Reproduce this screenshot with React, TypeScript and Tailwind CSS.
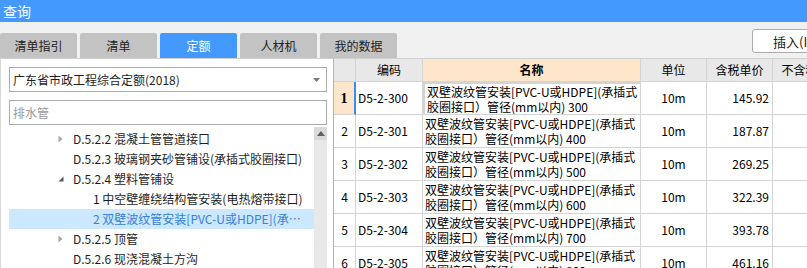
// Query panel: quota library tree on the left, quota item grid on the right

type TreeNode = {
  level: 2 | 3;
  arrow?: 'collapsed' | 'expanded';
  text: string;
  selected?: boolean;
};

const treeNodes: TreeNode[] = [
  { level: 2, arrow: 'collapsed', text: 'D.5.2.2 混凝土管管道接口' },
  { level: 2, text: 'D.5.2.3 玻璃钢夹砂管铺设(承插式胶圈接口)' },
  { level: 2, arrow: 'expanded', text: 'D.5.2.4 塑料管铺设' },
  { level: 3, text: '1 中空壁缠绕结构管安装(电热熔带接口)' },
  { level: 3, text: '2 双壁波纹管安装[PVC-U或HDPE](承插式胶圈接口)', selected: true },
  { level: 2, arrow: 'collapsed', text: 'D.5.2.5 顶管' },
  { level: 2, text: 'D.5.2.6 现浇混凝土方沟' },
];

const rows = [
  { code: 'D5-2-300', size: '300', price: '145.92' },
  { code: 'D5-2-301', size: '400', price: '187.87' },
  { code: 'D5-2-302', size: '500', price: '269.25' },
  { code: 'D5-2-303', size: '600', price: '322.39' },
  { code: 'D5-2-304', size: '700', price: '393.78' },
  { code: 'D5-2-305', size: '800', price: '461.16' },
];

const tabs = ['清单指引', '清单', '定额', '人材机', '我的数据'];

const font = 'font-["Noto_Sans_CJK_SC","Noto_Sans",sans-serif]';

// ─── Small drawings ──────────────────────────────────────────────────────────

function TreeArrow({ kind }: { kind?: 'collapsed' | 'expanded' }) {
  if (kind === 'collapsed') {
    return (
      <svg width="8" height="8" viewBox="0 0 8 8" className="block">
        <path d="M1.5 0.5 L5.5 4 L1.5 7.5 Z" fill="#a6a6a6" />
      </svg>
    );
  }
  if (kind === 'expanded') {
    return (
      <svg width="8" height="8" viewBox="0 0 8 8" className="block">
        <path d="M6.5 1.5 L6.5 6.5 L1.5 6.5 Z" fill="#595959" />
      </svg>
    );
  }
  return null;
}

// ─── Left panel ─────────────────────────────────────────────────────────────

function LibraryPanel() {
  return (
    <div className="w-[333px] shrink-0 bg-white border-l border-[#d8d8d8] flex flex-col pl-[8px] pt-[8px]">
      {/* library select */}
      <div className="w-[318px] h-[25px] border border-[#ababab] flex items-center justify-between pl-[3px] pr-[6px]">
        <span className="text-[12px] text-[#1e1e1e] leading-none">广东省市政工程综合定额(2018)</span>
        <svg width="7" height="4" viewBox="0 0 7 4">
          <path d="M0 0 L7 0 L3.5 4 Z" fill="#7a7a7a" />
        </svg>
      </div>

      {/* search box */}
      <div className="w-[318px] h-[25px] mt-[8px] border border-[#ababab] flex items-center pl-[3px]">
        <span className="text-[12px] text-[#9a9a9a] leading-none">排水管</span>
      </div>

      {/* tree + scrollbar */}
      <div className="flex mt-[2px] flex-1 min-h-0">
        <div className="w-[305px] pt-[2px]">
          {treeNodes.map((n) => (
            <div
              key={n.text}
              className={`h-[20px] flex items-center pr-[10px] ${n.selected ? 'bg-[#cce8ff]' : ''} ${
                n.level === 2 ? 'pl-[48px]' : 'pl-[68px]'
              }`}
            >
              <span className="w-[16px] shrink-0 flex items-center">
                <TreeArrow kind={n.arrow} />
              </span>
              <span
                className={`flex-1 min-w-0 text-[12px] leading-[20px] whitespace-nowrap overflow-hidden text-ellipsis ${
                  n.selected ? 'text-[#3a7fd5]' : 'text-[#1e1e1e]'
                }`}
              >
                {n.text}
              </span>
            </div>
          ))}
        </div>
        <div className="w-[13px] bg-[#e8e8e8] flex flex-col">
          <div className="h-[13px] bg-[#dadada] flex items-center justify-center">
            <svg width="8" height="5" viewBox="0 0 8 5">
              <path d="M0 5 L4 0 L8 5 Z" fill="#606060" />
            </svg>
          </div>
        </div>
      </div>
    </div>
  );
}

// ─── Right grid ─────────────────────────────────────────────────────────────

const cols = 'grid grid-cols-[22px_67px_218px_66px_66px_78px]';
const cell = 'border-r border-b border-[#d4d4d4]';

function QuotaGrid() {
  return (
    <div className="flex-1 bg-white border-l border-[#b4b4b4] relative">
      <div className={`${cols} h-[23px]`}>
        <div className={`${cell} bg-[#e8e8e8]`} />
        <div className={`${cell} bg-[#e8e8e8] flex items-center justify-center text-[12px]`}>编码</div>
        <div className={`${cell} bg-[#fde6c9] flex items-center justify-center text-[12px] font-bold`}>名称</div>
        <div className={`${cell} bg-[#e8e8e8] flex items-center justify-center text-[12px]`}>单位</div>
        <div className={`${cell} bg-[#e8e8e8] flex items-center justify-center text-[12px]`}>含税单价</div>
        <div className={`${cell} bg-[#e8e8e8] flex items-center justify-center text-[12px] whitespace-nowrap`}>不含税单价</div>
      </div>

      {rows.map((r, i) => (
        <div key={r.code} className={`${cols} h-[33px] text-[12px] text-black`}>
          <div
            className={`${cell} flex items-center justify-center ${
              i === 0 ? 'bg-[#fde6c9] font-bold font-["Liberation_Serif",serif] text-[14px] border-r-2 border-r-[#3b8af2]' : ''
            }`}
          >
            {i + 1}
          </div>
          <div className={`${cell} flex items-center pl-[2px]`}>{r.code}</div>
          <div
            className={`${cell} flex items-center pl-[2px] leading-[15px] whitespace-nowrap overflow-hidden ${
              i === 0 ? 'border-2 border-[#1f6fe5] pl-[1px]' : ''
            }`}
          >
            <div>
              <div>双壁波纹管安装[PVC-U或HDPE](承插式</div>
              <div>胶圈接口）管径(mm以内) {r.size}</div>
            </div>
          </div>
          <div className={`${cell} flex items-center justify-center`}>10m</div>
          <div className={`${cell} flex items-center justify-end pr-[3px]`}>{r.price}</div>
          <div className={cell} />
        </div>
      ))}
    </div>
  );
}

// ─── Main export ────────────────────────────────────────────────────────────

export default function App() {
  return (
    <div className={`w-[807px] h-[268px] overflow-hidden bg-[#f0f0f0] ${font}`}>
      <div className="w-[851px] h-[268px] flex flex-col">
        {/* title bar */}
        <div className="h-[22px] bg-[#4499ff] flex items-center pl-[3px]">
          <span className="text-[14px] text-white leading-none">查询</span>
        </div>

        {/* tabs + insert button */}
        <div className="h-[37px] flex border-b border-[#d0d0d0]">
          <div className="flex items-end gap-[3px]">
            {tabs.map((t) => (
              <div
                key={t}
                className={`w-[77px] h-[25px] rounded-t-[2px] flex items-center justify-center text-[12px] ${
                  t === '定额' ? 'bg-[#4499ff] text-white' : 'bg-[#c3c3c3] text-[#222]'
                }`}
              >
                {t}
              </div>
            ))}
          </div>
          <button
            type="button"
            className="ml-auto mr-[22px] mt-[7px] w-[77px] h-[24px] bg-white border border-[#adadad] rounded-[3px] text-[13px] text-[#222] text-left pl-[20px] leading-none"
          >
            插入(I)
          </button>
        </div>

        {/* body */}
        <div className="flex flex-1 min-h-0">
          <LibraryPanel />
          <QuotaGrid />
        </div>
      </div>
    </div>
  );
}
